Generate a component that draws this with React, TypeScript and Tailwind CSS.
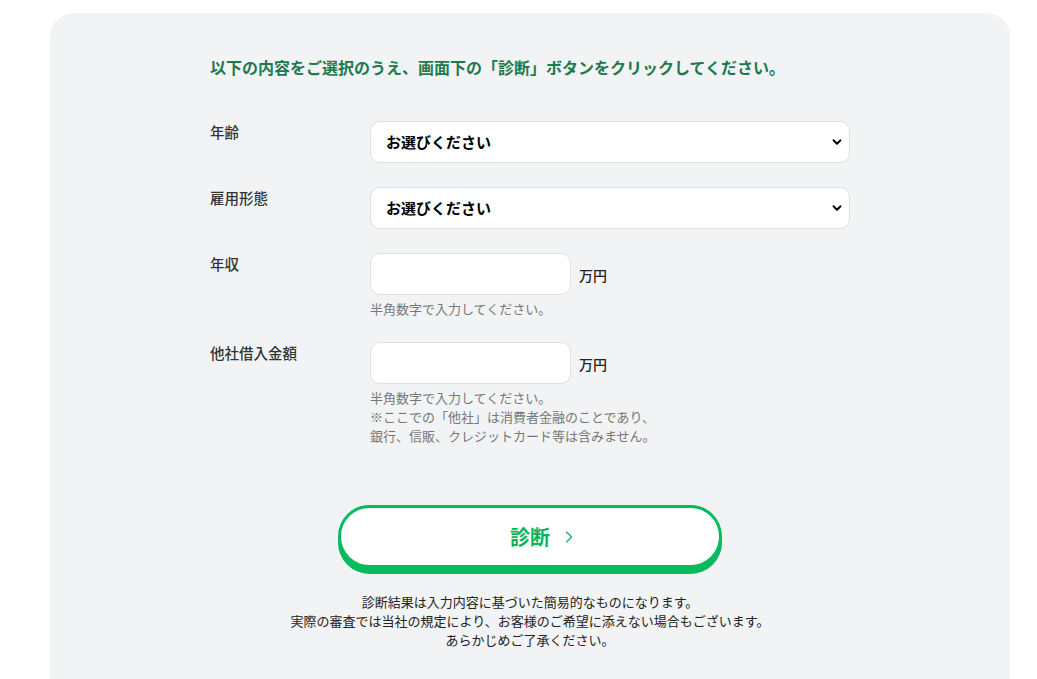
import {ChevronDown, ChevronRight} from "lucide-react";

const font = {fontFamily: '"Noto Sans CJK JP", "Noto Sans", sans-serif'};

function SelectField() {
  return (
    <div className="relative h-[42px] w-[480px]">
      <select
        defaultValue=""
        className="h-full w-full appearance-none rounded-[10px] border border-[#dedfe1] bg-white pl-[15px] pr-10 text-[15px] font-bold text-black outline-none"
      >
        <option value="">お選びください</option>
      </select>
      <ChevronDown
        size={14}
        strokeWidth={3.2}
        className="pointer-events-none absolute right-[6px] top-1/2 -translate-y-1/2 text-black"
      />
    </div>
  );
}

function AmountField({hints}: { hints: string[] }) {
  return (
    <div className="flex flex-col">
      <div className="flex items-center gap-2">
        <input
          type="text"
          className="h-[42px] w-[201px] rounded-[10px] border border-[#dedfe1] bg-white px-3 text-[15px] outline-none"
        />
        <span className="pt-[2px] text-[14px] font-medium text-[#222]">万円</span>
      </div>
      <div className="mt-[4px] text-[13px] leading-[19px] text-[#777]">
        {hints.map((h) => (
          <p key={h}>{h}</p>
        ))}
      </div>
    </div>
  );
}

function Row({label, children}: { label: string; children: React.ReactNode }) {
  return (
    <div className="flex">
      <div className="w-[160px] shrink-0 text-[14.5px] font-medium text-[#333]">{label}</div>
      {children}
    </div>
  );
}

export default function App() {
  return (
    <div className="h-[679px] overflow-hidden bg-white pt-[13px]" style={font}>
      <div className="ml-[50px] h-[720px] w-[960px] rounded-t-[24px] bg-[#f2f3f5] pt-[42px]">
        <div className="mx-auto w-[640px]">
          <h2 className="text-[16px] font-bold leading-[24px] text-[#1b7a4e]">
            以下の内容をご選択のうえ、画面下の「診断」ボタンをクリックしてください。
          </h2>

          <div className="mt-[42px] flex flex-col gap-6">
            <Row label="年齢">
              <SelectField />
            </Row>
            <Row label="雇用形態">
              <SelectField />
            </Row>
            <Row label="年収">
              <AmountField hints={["半角数字で入力してください。"]} />
            </Row>
            <Row label="他社借入金額">
              <AmountField
                hints={[
                  "半角数字で入力してください。",
                  "※ここでの「他社」は消費者金融のことであり、",
                  "銀行、信販、クレジットカード等は含みません。",
                ]}
              />
            </Row>
          </div>
        </div>

        <div className="mt-[60px] flex flex-col items-center">
          <button
            type="button"
            className="flex h-[63px] w-[384px] items-center justify-center rounded-full border-[3px] border-[#06bb5e] bg-white shadow-[0_6px_0_#06bb5e]"
          >
            <span className="relative text-[20px] font-bold text-[#06b45b]">
              診断
              <ChevronRight
                size={20}
                strokeWidth={1.4}
                className="absolute left-full top-1/2 ml-[9px] -translate-y-1/2 text-[#06b45b]"
              />
            </span>
          </button>

          <div className="mt-[24px] text-center text-[13px] leading-[19px] text-[#222]">
            <p>診断結果は入力内容に基づいた簡易的なものになります。</p>
            <p>実際の審査では当社の規定により、お客様のご希望に添えない場合もございます。</p>
            <p>あらかじめご了承ください。</p>
          </div>
        </div>
      </div>
    </div>
  );
}
